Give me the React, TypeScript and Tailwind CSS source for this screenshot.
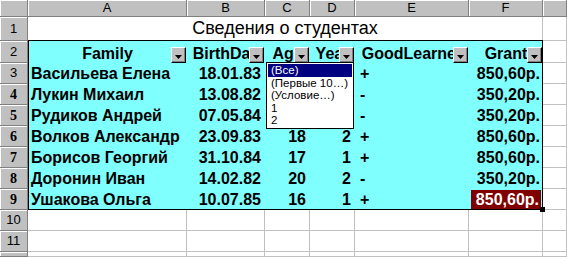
import React from "react";

const rows = [
  { name: "Васильева Елена", birth: "18.01.83", age: "", year: "", good: "+", grant: "850,60р." },
  { name: "Лукин Михаил", birth: "13.08.82", age: "", year: "", good: "-", grant: "350,20р." },
  { name: "Рудиков Андрей", birth: "07.05.84", age: "", year: "", good: "-", grant: "350,20р." },
  { name: "Волков Александр", birth: "23.09.83", age: "18", year: "2", good: "+", grant: "850,60р." },
  { name: "Борисов Георгий", birth: "31.10.84", age: "17", year: "1", good: "+", grant: "850,60р." },
  { name: "Доронин Иван", birth: "14.02.82", age: "20", year: "2", good: "-", grant: "350,20р." },
  { name: "Ушакова Ольга", birth: "10.07.85", age: "16", year: "1", good: "+", grant: "850,60р.", selected: true },
];

const headers = ["Family", "BirthDay", "Age", "Year", "GoodLearner", "Grant"];

const hdr =
  "bg-[#c0c0c0] border-r border-b border-[#808080] shadow-[inset_1px_1px_0_#ffffff] flex items-center justify-center text-[13px] text-black overflow-hidden";
const plain = "bg-white border-r border-b border-[#c0c0c0]";
const cyan = "bg-[#80ffff] overflow-hidden whitespace-nowrap text-[16px] font-bold text-black flex items-center leading-none";

const FilterButton = () => (
  <div className="absolute right-[1px] bottom-0 w-[15px] h-[16px] bg-[#c0c0c0] border-t border-l border-white border-r border-b border-r-black border-b-black shadow-[inset_-1px_-1px_0_#808080] flex items-center justify-center">
    <svg width="7" height="4" viewBox="0 0 7 4" className="mt-[3px]">
      <polygon points="0,0 7,0 3.5,4" fill="#000" />
    </svg>
  </div>
);

const RowNum = ({ n, hide }: { n: number; hide?: boolean }) => {
  const serif = n >= 4 && n <= 9;
  return (
    <div
      className={`${hdr} ${serif ? "font-['Liberation_Serif',serif] font-bold text-[14px]" : "font-['Liberation_Sans',sans-serif]"}`}
    >
      {hide ? "" : n}
    </div>
  );
};

export default function App() {
  return (
    <div className="relative w-[567px] h-[257px] overflow-hidden bg-white font-['Liberation_Sans',Arial,sans-serif]">
      <div className="grid h-[257px] grid-cols-[28px_159px_78px_45px_45px_114px_74px_1fr] grid-rows-[17px_24px_22px_repeat(9,21px)_1fr]">
        {/* column letters */}
        <div className={hdr}></div>
        {["A", "B", "C", "D", "E", "F"].map((c) => (
          <div key={c} className={hdr}>
            {c}
          </div>
        ))}
        <div className={hdr}></div>

        {/* row 1 */}
        <RowNum n={1} />
        <div className={`${plain} col-span-6 flex items-end justify-center pb-[3px] text-[18px] leading-none`}>
          Сведения о студентах
        </div>
        <div className={plain}></div>

        {/* row 2 */}
        <RowNum n={2} />
        {headers.map((h) => (
          <div key={h} className={`${cyan} relative justify-center pt-[3px]`}>
            <span>{h}</span>
            <FilterButton />
          </div>
        ))}
        <div className={plain}></div>

        {/* data rows */}
        {rows.map((r, i) => (
          <React.Fragment key={r.name}>
            <RowNum n={i + 3} />
            <div className={`${cyan} pl-[3px]`}>{r.name}</div>
            <div className={`${cyan} justify-end pr-[4px]`}>{r.birth}</div>
            <div className={`${cyan} justify-end pr-[4px]`}>{r.age}</div>
            <div className={`${cyan} justify-end pr-[4px]`}>{r.year}</div>
            <div className={`${cyan} pl-[5px]`}>{r.good}</div>
            {r.selected ? (
              <div className={`${cyan} justify-end`}>
                <span className="bg-[#800000] text-white h-[19px] ml-[2px] mr-[2px] w-full flex items-center justify-end pr-[2px]">
                  {r.grant}
                </span>
              </div>
            ) : (
              <div className={`${cyan} justify-end pr-[3px]`}>{r.grant}</div>
            )}
            <div className={plain}></div>
          </React.Fragment>
        ))}

        {/* empty rows */}
        {[10, 11, 12].map((n) => (
          <React.Fragment key={n}>
            <RowNum n={n} hide={n === 12} />
            {[0, 1, 2, 3, 4, 5, 6].map((c) => (
              <div key={c} className={plain}></div>
            ))}
          </React.Fragment>
        ))}
      </div>

      {/* selection frame around the list */}
      <div className="absolute left-[28px] top-[40px] w-[515px] h-[170px] border border-black pointer-events-none"></div>
      <div className="absolute left-[540px] top-[207px] w-[5px] h-[5px] bg-black"></div>

      {/* autofilter dropdown */}
      <div className="absolute left-[266px] top-[62px] w-[88px] h-[67px] bg-white border border-black text-[11.5px] leading-[12.6px] font-['Liberation_Sans',sans-serif]">
        <div className="bg-[#000080] text-white pl-[3px] mx-[1px] mt-[1px]">(Все)</div>
        <div className="pl-[4px] text-black">(Первые 10…)</div>
        <div className="pl-[4px] text-black">(Условие…)</div>
        <div className="pl-[4px] text-black">1</div>
        <div className="pl-[4px] text-black">2</div>
      </div>
    </div>
  );
}
